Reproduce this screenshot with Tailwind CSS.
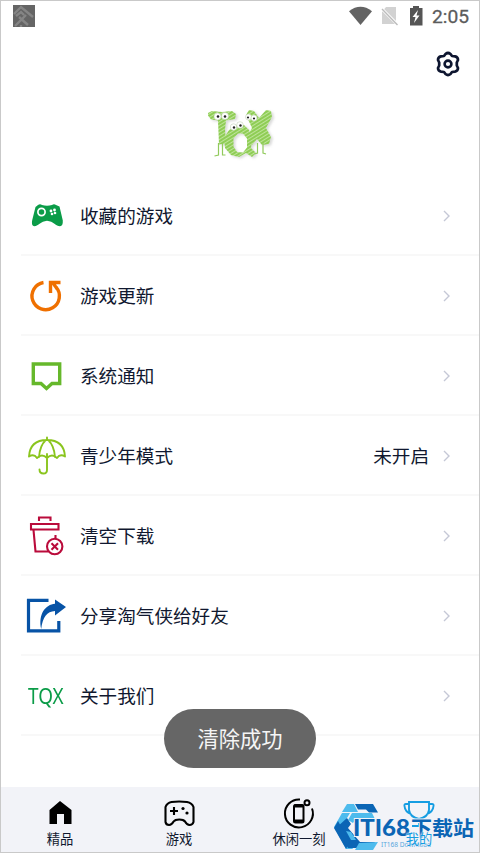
<!DOCTYPE html>
<html lang="zh-CN">
<head>
<meta charset="utf-8">
<title>淘气侠</title>
<script src="https://cdn.jsdelivr.net/npm/@tailwindcss/browser@4"></script>
</head>
<body class="w-[480px] h-[853px] overflow-hidden bg-white font-['Noto_Sans_CJK_SC',sans-serif] text-[#10182f]">
<div class="relative flex flex-col w-[480px] h-[853px] border border-[#c9c9c9] overflow-hidden">
  <header class="flex h-[30px] shrink-0 items-center justify-between pl-3 pr-[10px]">
    <svg class="w-[22px] h-[22px]" viewBox="0 0 22 22"><path fill="#656565" d="M0 0h22v22H0z"/><path d="M1 9 8 2l12 10M3 11l5-4 3 3M2 21 13 10M6 12l9 8M8 22v-2" fill="none" stroke="#858585" stroke-width="2.400"/></svg>
    <div class="flex items-center">
      <svg class="w-[78px] h-[22px]" viewBox="348 5 78 22">
        <path d="M349 11.200Q360.500 2.500 372 11.200L360.500 25Z" fill="#636363"/>
        <path d="M386 7h10v17h-14V12z" fill="#d2d2d2"/><path d="m381 8 17 17" stroke="#fff" stroke-width="3"/><path d="m382 9 15.500 16" stroke="#bcbcbc" stroke-width="1.400"/>
        <path d="M410 8h3V6h6v2h3.500v17.500H410z" fill="#555"/><path d="m418 10-5.500 7h3l-1.500 6 5.500-7.500h-3z" fill="#fff"/>
      </svg>
      <span class="ml-[6px] w-[37px] whitespace-nowrap pt-px font-['Roboto',sans-serif] text-[19.2px] leading-[22px] text-[#5c5c5c] [-webkit-text-stroke:0.3px_#5c5c5c]">2:05</span>
    </div>
  </header>
  <div class="flex h-[66px] shrink-0 justify-end pr-[18px] pt-[20px]">
    <svg class="w-[26px] h-[26px]" viewBox="435 51 26 26" fill="none" stroke="#0e1630"><path stroke-width="2.700" stroke-linejoin="round" d="M445.500 54q2.500-2 5 0l1.500 2 3 .4q3 .6 3 3.600l-1.200 2.500v3l1.200 2.500q0 3-3 3.600l-3 .4-1.500 2q-2.500 2-5 0l-1.500-2-3-.4q-3-.6-3-3.600l1.200-2.500v-3L438 60q0-3 3-3.600l3-.4z"/><circle cx="448" cy="64" r="3.400" stroke-width="2.600"/></svg>
  </div>
  <div class="flex h-[79px] shrink-0 justify-center pt-[7px]">
    <svg class="w-[80px] h-[60px]" viewBox="200 104 80 60">
      <defs><pattern id="hatch" width="3" height="3" patternUnits="userSpaceOnUse" patternTransform="rotate(-32)"><path d="M0 0h3v3H0z" fill="#8fcd55"/><path d="M0 .4h3" stroke="#c8e9aa" stroke-width=".9"/></pattern>
      <filter id="soft" x="-10%" y="-10%" width="130%" height="130%"><feDropShadow dx="2" dy="1.500" stdDeviation="1.200" flood-color="#888" flood-opacity=".3"/></filter></defs>
      <g filter="url(#soft)">
        <path fill="url(#hatch)" d="m208 113 4-2 10 1 10-1 4 3-1 5-9 1.500-1 9 1 14-7 1-1-24-7-1-3-4z"/>
        <path fill="url(#hatch)" fill-rule="evenodd" d="m229 130 6-5 9 0 5 5 3 10-1 8 5 5-4 4-6-4-7 4-8-2-6-7-1-10zm9 3.500-4.500 5v8l3.500 5.500 6 .5 4-5 0-9-4-5z"/>
        <path fill="url(#hatch)" d="m246 115 3-5 5 1 5 7 7-8 5 1 1 6-6 11 5 9-2 7-7 1-5-6-5 6-4-3 0-7 4-7z"/>
      </g>
      <path d="M218.500 143v12l-4 1M222.500 143v12h3M257.500 143v10l-3 1M263 142v11l3 1" fill="none" stroke="#91ca5c" stroke-width="1.200"/>
      <g fill="#fff" stroke="#b7c8aa" stroke-width=".5"><circle cx="217.500" cy="116.500" r="3.500"/><circle cx="225" cy="116" r="3.500"/><circle cx="233.500" cy="127" r="3.200"/><circle cx="240" cy="125" r="3.300"/><circle cx="248.500" cy="117" r="3"/><circle cx="254" cy="118" r="3"/></g>
      <g fill="#222"><circle cx="218" cy="116.500" r="1.300"/><circle cx="225" cy="116.500" r="1.300"/><circle cx="234" cy="127.500" r="1.200"/><circle cx="240.500" cy="125.500" r="1.200"/><circle cx="248" cy="117.500" r="1.100"/><circle cx="254" cy="118.500" r="1.100"/></g>
    </svg>
  </div>
  <main class="flex flex-1 flex-col pl-5 text-[18.6px] leading-[28px]">
    <div class="flex h-20 shrink-0 items-center border-b-2 border-[#f8f8f8] pt-[2px]">
      <svg class="w-[50px] h-[44px] mr-[9px]" viewBox="21 194 50 44"><path d="M38 205q2-1.500 4 0 5 1.500 10 0 2-1.500 4 0l3.500 1.500 3.300 14q.3 5.500-2.800 5.700c-4 0-6.500-5-13-5.500-6 .5-9.500 5.500-12.500 5.500-3 0-2.700-4-2.300-6L35.500 207z" fill="#0b9c48"/><circle cx="41.500" cy="212" r="3.600" fill="none" stroke="#fff" stroke-width="1.700"/><g fill="#fff"><circle cx="51" cy="211" r="1.400"/><circle cx="54.500" cy="210" r="1.400"/><circle cx="52" cy="214" r="1.300"/><circle cx="55" cy="213" r="1.300"/></g></svg>
      <span class="flex-1 -mt-[2px]">收藏的游戏</span>
      <svg class="w-3 h-3 mr-[26px]" viewBox="0 0 12 12"><path d="m3 1 5 5-5 5" fill="none" stroke="#c5c8d6" stroke-width="1.400"/></svg>
    </div>
    <div class="flex h-20 shrink-0 items-center border-b-2 border-[#f8f8f8] pt-[2px]">
      <svg class="w-[50px] h-[44px] mr-[9px]" viewBox="21 274 50 44" fill="none" stroke="#ef7000" stroke-width="3.400"><path d="M43.500 282.500a13.700 13.700 0 1 0 12.500 4.500"/><path d="M50.500 293v-10.500h10"/><path d="m50 282 10 0-4 2 2 4-2 2z" fill="#ef7000" stroke="none"/></svg>
      <span class="flex-1 -mt-[2px]">游戏更新</span>
      <svg class="w-3 h-3 mr-[26px]" viewBox="0 0 12 12"><path d="m3 1 5 5-5 5" fill="none" stroke="#c5c8d6" stroke-width="1.400"/></svg>
    </div>
    <div class="flex h-20 shrink-0 items-center border-b-2 border-[#f8f8f8] pt-[2px]">
      <svg class="w-[50px] h-[44px] mr-[9px]" viewBox="21 354 50 44"><path d="M33.300 364h26.400v19.500H52l-5.500 5-5.500-5h-7.700z" fill="none" stroke="#66b82b" stroke-width="3.400"/></svg>
      <span class="flex-1 -mt-[2px]">系统通知</span>
      <svg class="w-3 h-3 mr-[26px]" viewBox="0 0 12 12"><path d="m3 1 5 5-5 5" fill="none" stroke="#c5c8d6" stroke-width="1.400"/></svg>
    </div>
    <div class="flex h-20 shrink-0 items-center border-b-2 border-[#f8f8f8] pt-[2px]">
      <svg class="w-[50px] h-[44px] mr-[9px]" viewBox="21 434 50 44" fill="none" stroke="#8ac51e" stroke-width="1.900" stroke-linejoin="round" stroke-linecap="round"><path d="M29 456.500q1-16.500 18-16.500t18 16.500q-5-3-8 1.500-5-5-10 0-5-5-10 0-3-4.500-8-1.500ZM46 440q-6 5-7 17M48 440q6 5 7 17M47 437.500v2M47 454v16q0 3.500-3.500 3.500-4 0-4-4"/></svg>
      <span class="flex-1 -mt-[2px]">青少年模式</span><span class="-mt-[2px] mr-3">未开启</span>
      <svg class="w-3 h-3 mr-[26px]" viewBox="0 0 12 12"><path d="m3 1 5 5-5 5" fill="none" stroke="#c5c8d6" stroke-width="1.400"/></svg>
    </div>
    <div class="flex h-20 shrink-0 items-center border-b-2 border-[#f8f8f8] pt-[2px]">
      <svg class="w-[50px] h-[44px] mr-[9px]" viewBox="21 514 50 44" fill="none" stroke="#ba0b3b" stroke-width="2.100"><path d="M39 521v-3.500h11.500v3.500M31 524h27.500v5.500H31zM33.500 530l2 21.500H48M55.500 535v4"/><circle cx="54.700" cy="546.500" r="7.700"/><path d="m51.500 543.300 6.500 6.400m0-6.400-6.500 6.400"/></svg>
      <span class="flex-1 -mt-[2px]">清空下载</span>
      <svg class="w-3 h-3 mr-[26px]" viewBox="0 0 12 12"><path d="m3 1 5 5-5 5" fill="none" stroke="#c5c8d6" stroke-width="1.400"/></svg>
    </div>
    <div class="flex h-20 shrink-0 items-center border-b-2 border-[#f8f8f8] pt-[2px]">
      <svg class="w-[50px] h-[44px] mr-[9px]" viewBox="21 594 50 44"><path d="M48.500 600.300h-20v30.500h30.300V621" fill="none" stroke="#0753a6" stroke-width="3.200"/><path d="M55 599.500 66 607l-11 8.500v-4.500q-12 .5-13.800 18c-3.200-15 4.300-24.500 13.800-25.300z" fill="#0753a6"/></svg>
      <span class="flex-1 -mt-[2px]">分享淘气侠给好友</span>
      <svg class="w-3 h-3 mr-[26px]" viewBox="0 0 12 12"><path d="m3 1 5 5-5 5" fill="none" stroke="#c5c8d6" stroke-width="1.400"/></svg>
    </div>
    <div class="flex h-20 shrink-0 items-center border-b-2 border-[#f8f8f8] pt-[2px]">
      <span class="-mt-[2px] w-[52px] pl-[7px] mr-[7px] font-['Noto_Sans',sans-serif] text-[22px] text-[#0b9c48]"><span class="inline-block origin-left scale-x-[.86]">TQX</span></span>
      <span class="flex-1 -mt-[2px]">关于我们</span>
      <svg class="w-3 h-3 mr-[26px]" viewBox="0 0 12 12"><path d="m3 1 5 5-5 5" fill="none" stroke="#c5c8d6" stroke-width="1.400"/></svg>
    </div>
  </main>
  <nav class="relative grid h-[65px] shrink-0 grid-cols-[118px_120px_120px_120px] bg-[#f2f3f8] text-[13.3px] leading-[18px]">
    <div class="flex flex-col items-center pt-[9px]">
      <svg class="w-[34px] h-[34px]" viewBox="43 795 34 34"><path d="m60 800 11.500 9v14H64v-10h-7v10h-7.500v-14z"/></svg><span>精品</span>
    </div>
    <div class="flex flex-col items-center pt-[9px]">
      <svg class="w-[34px] h-[34px]" viewBox="163 795 34 34" fill="none" stroke="#000" stroke-width="2.100" stroke-linejoin="round"><path d="M172.500 801q7.500-1 15.500 0 5 1 6.500 5v15q-1 3-4 3-2.500 0-4.500-3.500-1.500-2-5.700-2-4.300 0-5.700 2-2 3.500-4.500 3.500-3 0-3.600-3v-15q1.500-4 6-5Z"/><path d="M171 810h8M175 806v8"/><g fill="#000" stroke="none"><circle cx="184" cy="807.500" r="1.600"/><circle cx="188" cy="812" r="1.600"/></g></svg><span>游戏</span>
    </div>
    <div class="flex flex-col items-center pt-[9px]">
      <svg class="w-[34px] h-[34px]" viewBox="283 795 34 34" fill="none" stroke="#000" stroke-width="2"><path d="M301 798.500a14 14 0 1 0 12 9"/><circle cx="308" cy="801.700" r="2.500"/><rect x="295" y="804" width="9.500" height="17.500" rx="1.500"/><path d="M295 805h9.500M295 820h9.500" stroke-width="3"/></svg><span>休闲一刻</span>
    </div>
    <div class="flex flex-col items-center pt-[9px] text-[#159de2]">
      <svg class="w-[34px] h-[34px]" viewBox="403 795 34 34" fill="none" stroke="#159de2" stroke-width="1.900"><path d="M410 801h20v8q-1 7-10 9-9-2-10-9zM410 803h-3q-2 0-1.500 2 .5 6 6.500 8M430 803h3q2 0 1.500 2-.5 6-6.500 8M420 818v7M413 825h14"/></svg><span class="relative z-10 [text-shadow:0_0_2px_#f2f3f8,0_0_2px_#f2f3f8]">我的</span>
    </div>
    <svg class="absolute left-[330px] top-[14px] w-[148px] h-[51px]" viewBox="331 801 148 51">
      <path d="M347 804h7l4 8h-16z" fill="#4ebbed"/>
      <path d="M355 804h18l5 8.500h-9l-3-3h-8z" fill="#0b65b5"/>
      <path d="M352 813h20l3 6h-19l-3 4-5-3z" fill="#4ebbed"/>
      <path d="m342 813 8 0-9 15 12 21h-7l-12-22z" fill="#4ebbed"/>
      <path d="m347 818 4 6-3 4 12 14h15l-3 6h-24l-12-20z" fill="#0b65b5"/>
      <path d="m334 828 4-7 12 21-4 7z" fill="#0b65b5"/>
      <path d="m351 832 5 8h-5l-5-9z" fill="#4ebbed"/>
      <path d="m359 843 19-1-5 8h-18z" fill="#4ebbed"/>
      <g fill="#0b65b5" stroke="#f2f3f8" stroke-width="2" paint-order="stroke">
        <text x="353" y="835.500" font-family="Lato,sans-serif" font-size="22" font-weight="900" textLength="57" lengthAdjust="spacingAndGlyphs">ITI68</text>
        <text x="411" y="835.500" font-size="20" font-weight="700" font-family="'Noto Sans CJK SC',sans-serif" textLength="63" lengthAdjust="spacingAndGlyphs">下载站</text>
        <text x="381" y="847" font-family="'Noto Sans',sans-serif" font-size="6.500" fill="#57a6dc" stroke="none" textLength="50" lengthAdjust="spacingAndGlyphs">IT168 Download</text>
      </g>
    </svg>
  </nav>
  <div class="absolute left-[163px] top-[708px] flex h-[59px] w-[152px] items-center justify-center rounded-full bg-[#666] pb-px text-[21.3px] text-[#f5f5f5]">清除成功</div>
</div>
</body>
</html>
